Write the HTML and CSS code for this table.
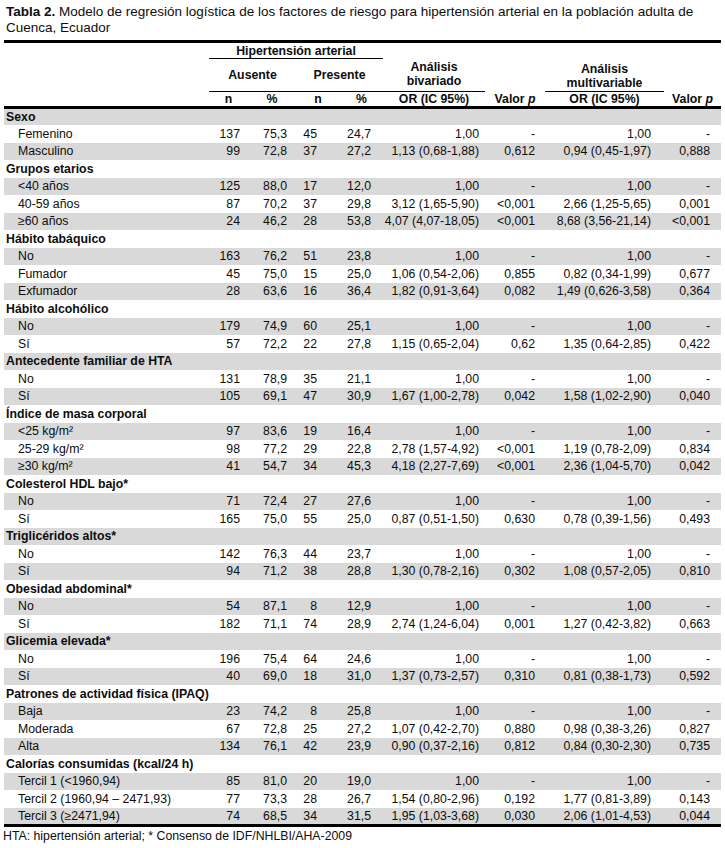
FILE: index.html
```html
<!DOCTYPE html>
<html lang="es">
<head>
<meta charset="utf-8">
<title>Tabla 2</title>
<link rel="stylesheet" href="styles.css">
</head>
<body>
<div class="page">
<p class="caption"><b class="cap-lead">Tabla 2.</b> Modelo de regresión logística de los factores de riesgo para hipertensión arterial en la población adulta de Cuenca, Ecuador</p>
<table class="tbl">
<colgroup>
<col class="c-lab"><col class="c-n1"><col class="c-p1"><col class="c-n2"><col class="c-p2"><col class="c-or1"><col class="c-v1"><col class="c-or2"><col class="c-v2">
</colgroup>
<thead>
<tr class="hr-a">
<th rowspan="3" class="h-lab"></th>
<th colspan="4" class="h-hta">Hipertensión arterial</th>
<th rowspan="2" class="h-biv">Análisis<br>bivariado</th>
<th rowspan="3" class="h-vp">Valor <i>p</i></th>
<th rowspan="2" class="h-multi">Análisis<br>multivariable</th>
<th rowspan="3" class="h-vp">Valor <i>p</i></th>
</tr>
<tr class="hr-b">
<th colspan="2" class="h-grp">Ausente</th>
<th colspan="2" class="h-grp">Presente</th>
</tr>
<tr class="hr-c">
<th>n</th><th>%</th><th>n</th><th>%</th><th>OR (IC 95%)</th><th>OR (IC 95%)</th>
</tr>
</thead>
<tbody>
<tr class="grp"><td colspan="9">Sexo</td></tr>
<tr><td>Femenino</td><td>137</td><td>75,3</td><td>45</td><td>24,7</td><td>1,00</td><td>-</td><td>1,00</td><td>-</td></tr>
<tr><td>Masculino</td><td>99</td><td>72,8</td><td>37</td><td>27,2</td><td>1,13 (0,68-1,88)</td><td>0,612</td><td>0,94 (0,45-1,97)</td><td>0,888</td></tr>
<tr class="grp"><td colspan="9">Grupos etarios</td></tr>
<tr><td>&lt;40 años</td><td>125</td><td>88,0</td><td>17</td><td>12,0</td><td>1,00</td><td>-</td><td>1,00</td><td>-</td></tr>
<tr><td>40-59 años</td><td>87</td><td>70,2</td><td>37</td><td>29,8</td><td>3,12 (1,65-5,90)</td><td>&lt;0,001</td><td>2,66 (1,25-5,65)</td><td>0,001</td></tr>
<tr><td>≥60 años</td><td>24</td><td>46,2</td><td>28</td><td>53,8</td><td>4,07 (4,07-18,05)</td><td>&lt;0,001</td><td>8,68 (3,56-21,14)</td><td>&lt;0,001</td></tr>
<tr class="grp"><td colspan="9">Hábito tabáquico</td></tr>
<tr><td>No</td><td>163</td><td>76,2</td><td>51</td><td>23,8</td><td>1,00</td><td>-</td><td>1,00</td><td>-</td></tr>
<tr><td>Fumador</td><td>45</td><td>75,0</td><td>15</td><td>25,0</td><td>1,06 (0,54-2,06)</td><td>0,855</td><td>0,82 (0,34-1,99)</td><td>0,677</td></tr>
<tr><td>Exfumador</td><td>28</td><td>63,6</td><td>16</td><td>36,4</td><td>1,82 (0,91-3,64)</td><td>0,082</td><td>1,49 (0,626-3,58)</td><td>0,364</td></tr>
<tr class="grp"><td colspan="9">Hábito alcohólico</td></tr>
<tr><td>No</td><td>179</td><td>74,9</td><td>60</td><td>25,1</td><td>1,00</td><td>-</td><td>1,00</td><td>-</td></tr>
<tr><td>Sí</td><td>57</td><td>72,2</td><td>22</td><td>27,8</td><td>1,15 (0,65-2,04)</td><td>0,62</td><td>1,35 (0,64-2,85)</td><td>0,422</td></tr>
<tr class="grp"><td colspan="9">Antecedente familiar de HTA</td></tr>
<tr><td>No</td><td>131</td><td>78,9</td><td>35</td><td>21,1</td><td>1,00</td><td>-</td><td>1,00</td><td>-</td></tr>
<tr><td>Sí</td><td>105</td><td>69,1</td><td>47</td><td>30,9</td><td>1,67 (1,00-2,78)</td><td>0,042</td><td>1,58 (1,02-2,90)</td><td>0,040</td></tr>
<tr class="grp"><td colspan="9">Índice de masa corporal</td></tr>
<tr><td>&lt;25 kg/m²</td><td>97</td><td>83,6</td><td>19</td><td>16,4</td><td>1,00</td><td>-</td><td>1,00</td><td>-</td></tr>
<tr><td>25-29 kg/m²</td><td>98</td><td>77,2</td><td>29</td><td>22,8</td><td>2,78 (1,57-4,92)</td><td>&lt;0,001</td><td>1,19 (0,78-2,09)</td><td>0,834</td></tr>
<tr><td>≥30 kg/m²</td><td>41</td><td>54,7</td><td>34</td><td>45,3</td><td>4,18 (2,27-7,69)</td><td>&lt;0,001</td><td>2,36 (1,04-5,70)</td><td>0,042</td></tr>
<tr class="grp"><td colspan="9">Colesterol HDL bajo*</td></tr>
<tr><td>No</td><td>71</td><td>72,4</td><td>27</td><td>27,6</td><td>1,00</td><td>-</td><td>1,00</td><td>-</td></tr>
<tr><td>Sí</td><td>165</td><td>75,0</td><td>55</td><td>25,0</td><td>0,87 (0,51-1,50)</td><td>0,630</td><td>0,78 (0,39-1,56)</td><td>0,493</td></tr>
<tr class="grp"><td colspan="9">Triglicéridos altos*</td></tr>
<tr><td>No</td><td>142</td><td>76,3</td><td>44</td><td>23,7</td><td>1,00</td><td>-</td><td>1,00</td><td>-</td></tr>
<tr><td>Sí</td><td>94</td><td>71,2</td><td>38</td><td>28,8</td><td>1,30 (0,78-2,16)</td><td>0,302</td><td>1,08 (0,57-2,05)</td><td>0,810</td></tr>
<tr class="grp"><td colspan="9">Obesidad abdominal*</td></tr>
<tr><td>No</td><td>54</td><td>87,1</td><td>8</td><td>12,9</td><td>1,00</td><td>-</td><td>1,00</td><td>-</td></tr>
<tr><td>Sí</td><td>182</td><td>71,1</td><td>74</td><td>28,9</td><td>2,74 (1,24-6,04)</td><td>0,001</td><td>1,27 (0,42-3,82)</td><td>0,663</td></tr>
<tr class="grp"><td colspan="9">Glicemia elevada*</td></tr>
<tr><td>No</td><td>196</td><td>75,4</td><td>64</td><td>24,6</td><td>1,00</td><td>-</td><td>1,00</td><td>-</td></tr>
<tr><td>Sí</td><td>40</td><td>69,0</td><td>18</td><td>31,0</td><td>1,37 (0,73-2,57)</td><td>0,310</td><td>0,81 (0,38-1,73)</td><td>0,592</td></tr>
<tr class="grp"><td colspan="9">Patrones de actividad física (IPAQ)</td></tr>
<tr><td>Baja</td><td>23</td><td>74,2</td><td>8</td><td>25,8</td><td>1,00</td><td>-</td><td>1,00</td><td>-</td></tr>
<tr><td>Moderada</td><td>67</td><td>72,8</td><td>25</td><td>27,2</td><td>1,07 (0,42-2,70)</td><td>0,880</td><td>0,98 (0,38-3,26)</td><td>0,827</td></tr>
<tr><td>Alta</td><td>134</td><td>76,1</td><td>42</td><td>23,9</td><td>0,90 (0,37-2,16)</td><td>0,812</td><td>0,84 (0,30-2,30)</td><td>0,735</td></tr>
<tr class="grp"><td colspan="9">Calorías consumidas (kcal/24 h)</td></tr>
<tr><td>Tercil 1 (&lt;1960,94)</td><td>85</td><td>81,0</td><td>20</td><td>19,0</td><td>1,00</td><td>-</td><td>1,00</td><td>-</td></tr>
<tr><td>Tercil 2 (1960,94 – 2471,93)</td><td>77</td><td>73,3</td><td>28</td><td>26,7</td><td>1,54 (0,80-2,96)</td><td>0,192</td><td>1,77 (0,81-3,89)</td><td>0,143</td></tr>
<tr><td>Tercil 3 (≥2471,94)</td><td>74</td><td>68,5</td><td>34</td><td>31,5</td><td>1,95 (1,03-3,68)</td><td>0,030</td><td>2,06 (1,01-4,53)</td><td>0,044</td></tr>
</tbody>
</table>
<p class="foot">HTA: hipertensión arterial; * Consenso de IDF/NHLBI/AHA-2009</p>
</div>
</body>
</html>
```

FILE: styles.css
```css
html, body {
  margin: 0;
  padding: 0;
  background: #ffffff;
}

.page {
  padding: 4px 4px 0 4px;
  font-family: "Liberation Sans", Arial, sans-serif;
  color: #0d0d0d;
}

.caption {
  margin: 0 0 0 2px;
  font-size: 13.5px;
  line-height: 16px;
  width: 714px;
}

.cap-lead {
  font-weight: bold;
}

.tbl {
  margin-top: 4px;
  width: 717px;
  table-layout: fixed;
  border-collapse: collapse;
  font-size: 12.3px;
  border-top: 3px solid #000;
  border-bottom: 3px solid #000;
}

.c-lab { width: 205px; }
.c-n1 { width: 39px; }
.c-p1 { width: 48px; }
.c-n2 { width: 44px; }
.c-p2 { width: 43px; }
.c-or1 { width: 102px; }
.c-v1 { width: 60px; }
.c-or2 { width: 119px; }
.c-v2 { width: 57px; }

.tbl th {
  font-weight: bold;
  text-align: center;
  padding: 0;
  line-height: 14px;
}

.hr-a { height: 17px; }
.hr-b { height: 33px; }
.hr-c { height: 16px; }

.hr-c th {
  border-bottom: 3px solid #000;
  vertical-align: middle;
}

.h-lab, .h-vp {
  border-bottom: 3px solid #000;
  vertical-align: bottom;
  padding-bottom: 1px;
}

.h-hta {
  border-bottom: 1px solid #000;
  vertical-align: middle;
}

.h-grp {
  border-bottom: 1px solid #000;
  vertical-align: middle;
}

.tbl th.h-biv {
  border-bottom: 1px solid #000;
  vertical-align: bottom;
  padding-bottom: 3px;
}

.tbl th.h-multi {
  border-bottom: 1px solid #000;
  vertical-align: bottom;
  padding-bottom: 1px;
}

.tbl tbody tr {
  height: 17.5px;
}

.tbl tbody tr:nth-child(odd) {
  background: #d9d9d9;
}

.tbl td {
  padding: 0;
  line-height: 14px;
  text-align: right;
  white-space: nowrap;
  vertical-align: middle;
}

.tbl tbody td:first-child {
  text-align: left;
  padding-left: 14px;
}

.tbl tbody tr.grp td {
  font-weight: bold;
  padding-left: 2px;
  text-align: left;
}

.tbl tbody td:nth-child(2) { padding-right: 8px; }
.tbl tbody td:nth-child(3) { padding-right: 9px; }
.tbl tbody td:nth-child(4) { padding-right: 23px; }
.tbl tbody td:nth-child(5) { padding-right: 12px; }
.tbl tbody td:nth-child(6) { padding-right: 6px; }
.tbl tbody td:nth-child(7) { padding-right: 10px; }
.tbl tbody td:nth-child(8) { padding-right: 13px; }
.tbl tbody td:nth-child(9) { padding-right: 11px; }

.foot {
  margin: 2px 0 0 -1px;
  font-size: 12.3px;
  line-height: 14px;
}
```
